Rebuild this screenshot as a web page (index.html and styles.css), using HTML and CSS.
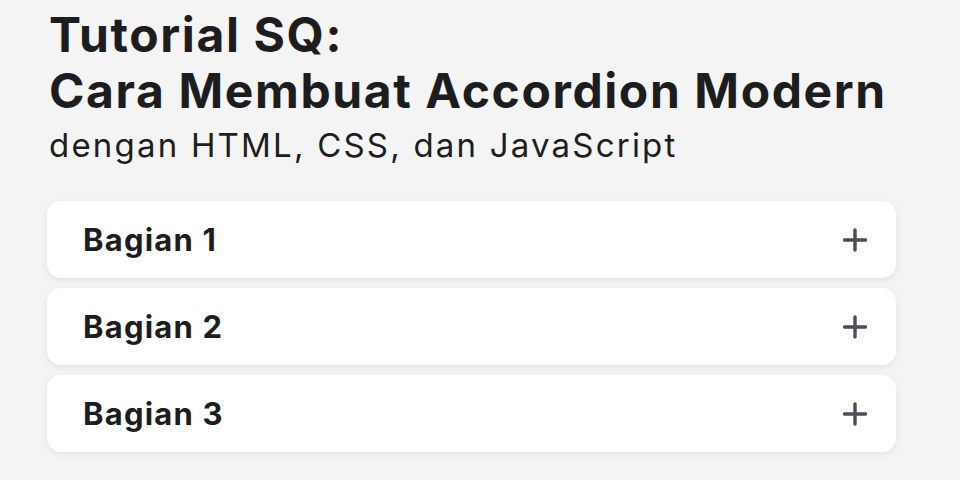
FILE: index.html
```html
<!DOCTYPE html>
<html lang="id">
<head>
<meta charset="utf-8">
<title>Tutorial SQ: Accordion</title>
<link rel="stylesheet" href="styles.css">
</head>
<body>
<main class="page">
  <header class="heading">
    <h1 class="title">Tutorial SQ:<br>Cara Membuat Accordion Modern</h1>
    <p class="subtitle">dengan HTML, CSS, dan JavaScript</p>
  </header>
  <section class="accordion">
    <div class="item">
      <button class="item-head"><span class="item-title">Bagian 1</span>
        <svg class="plus" viewBox="0 0 24 24"><path d="M12 2v20M1.5 12h21"/></svg>
      </button>
    </div>
    <div class="item">
      <button class="item-head"><span class="item-title">Bagian 2</span>
        <svg class="plus" viewBox="0 0 24 24"><path d="M12 2v20M1.5 12h21"/></svg>
      </button>
    </div>
    <div class="item">
      <button class="item-head"><span class="item-title">Bagian 3</span>
        <svg class="plus" viewBox="0 0 24 24"><path d="M12 2v20M1.5 12h21"/></svg>
      </button>
    </div>
  </section>
</main>
</body>
</html>
```
FILE: styles.css
```css
* { box-sizing: border-box; }
html, body { margin: 0; padding: 0; }
body {
  background: #f4f4f4;
  font-family: Inter, "Noto Sans", sans-serif;
  color: #1d1d1f;
  width: 960px;
  height: 480px;
  overflow: hidden;
}
.page {
  padding: 7px 64px 0 47px;
}
.heading { padding-left: 2px; }
.title {
  margin: 0;
  font-size: 48px;
  line-height: 56px;
  font-weight: 700;
  letter-spacing: 1.6px;
}
.subtitle {
  margin: 6px 0 0;
  font-size: 33px;
  line-height: 40px;
  font-weight: 400;
  letter-spacing: 2.2px;
}
.accordion {
  margin-top: 36px;
  display: flex;
  flex-direction: column;
  gap: 10px;
}
.item {
  background: #fff;
  border-radius: 14px;
  box-shadow: 0 2px 7px rgba(0,0,0,0.08);
}
.item-head {
  width: 100%;
  height: 77px;
  border: 0;
  background: transparent;
  display: flex;
  align-items: center;
  justify-content: space-between;
  padding: 0 29px 0 36px;
  font-family: inherit;
  color: inherit;
  cursor: pointer;
}
.item-title {
  font-size: 31px;
  font-weight: 700;
  letter-spacing: 1.2px;
}
.plus {
  width: 24px;
  height: 24px;
  fill: none;
  stroke: #4a4e56;
  stroke-width: 3.4;
  stroke-linecap: round;
}
```
